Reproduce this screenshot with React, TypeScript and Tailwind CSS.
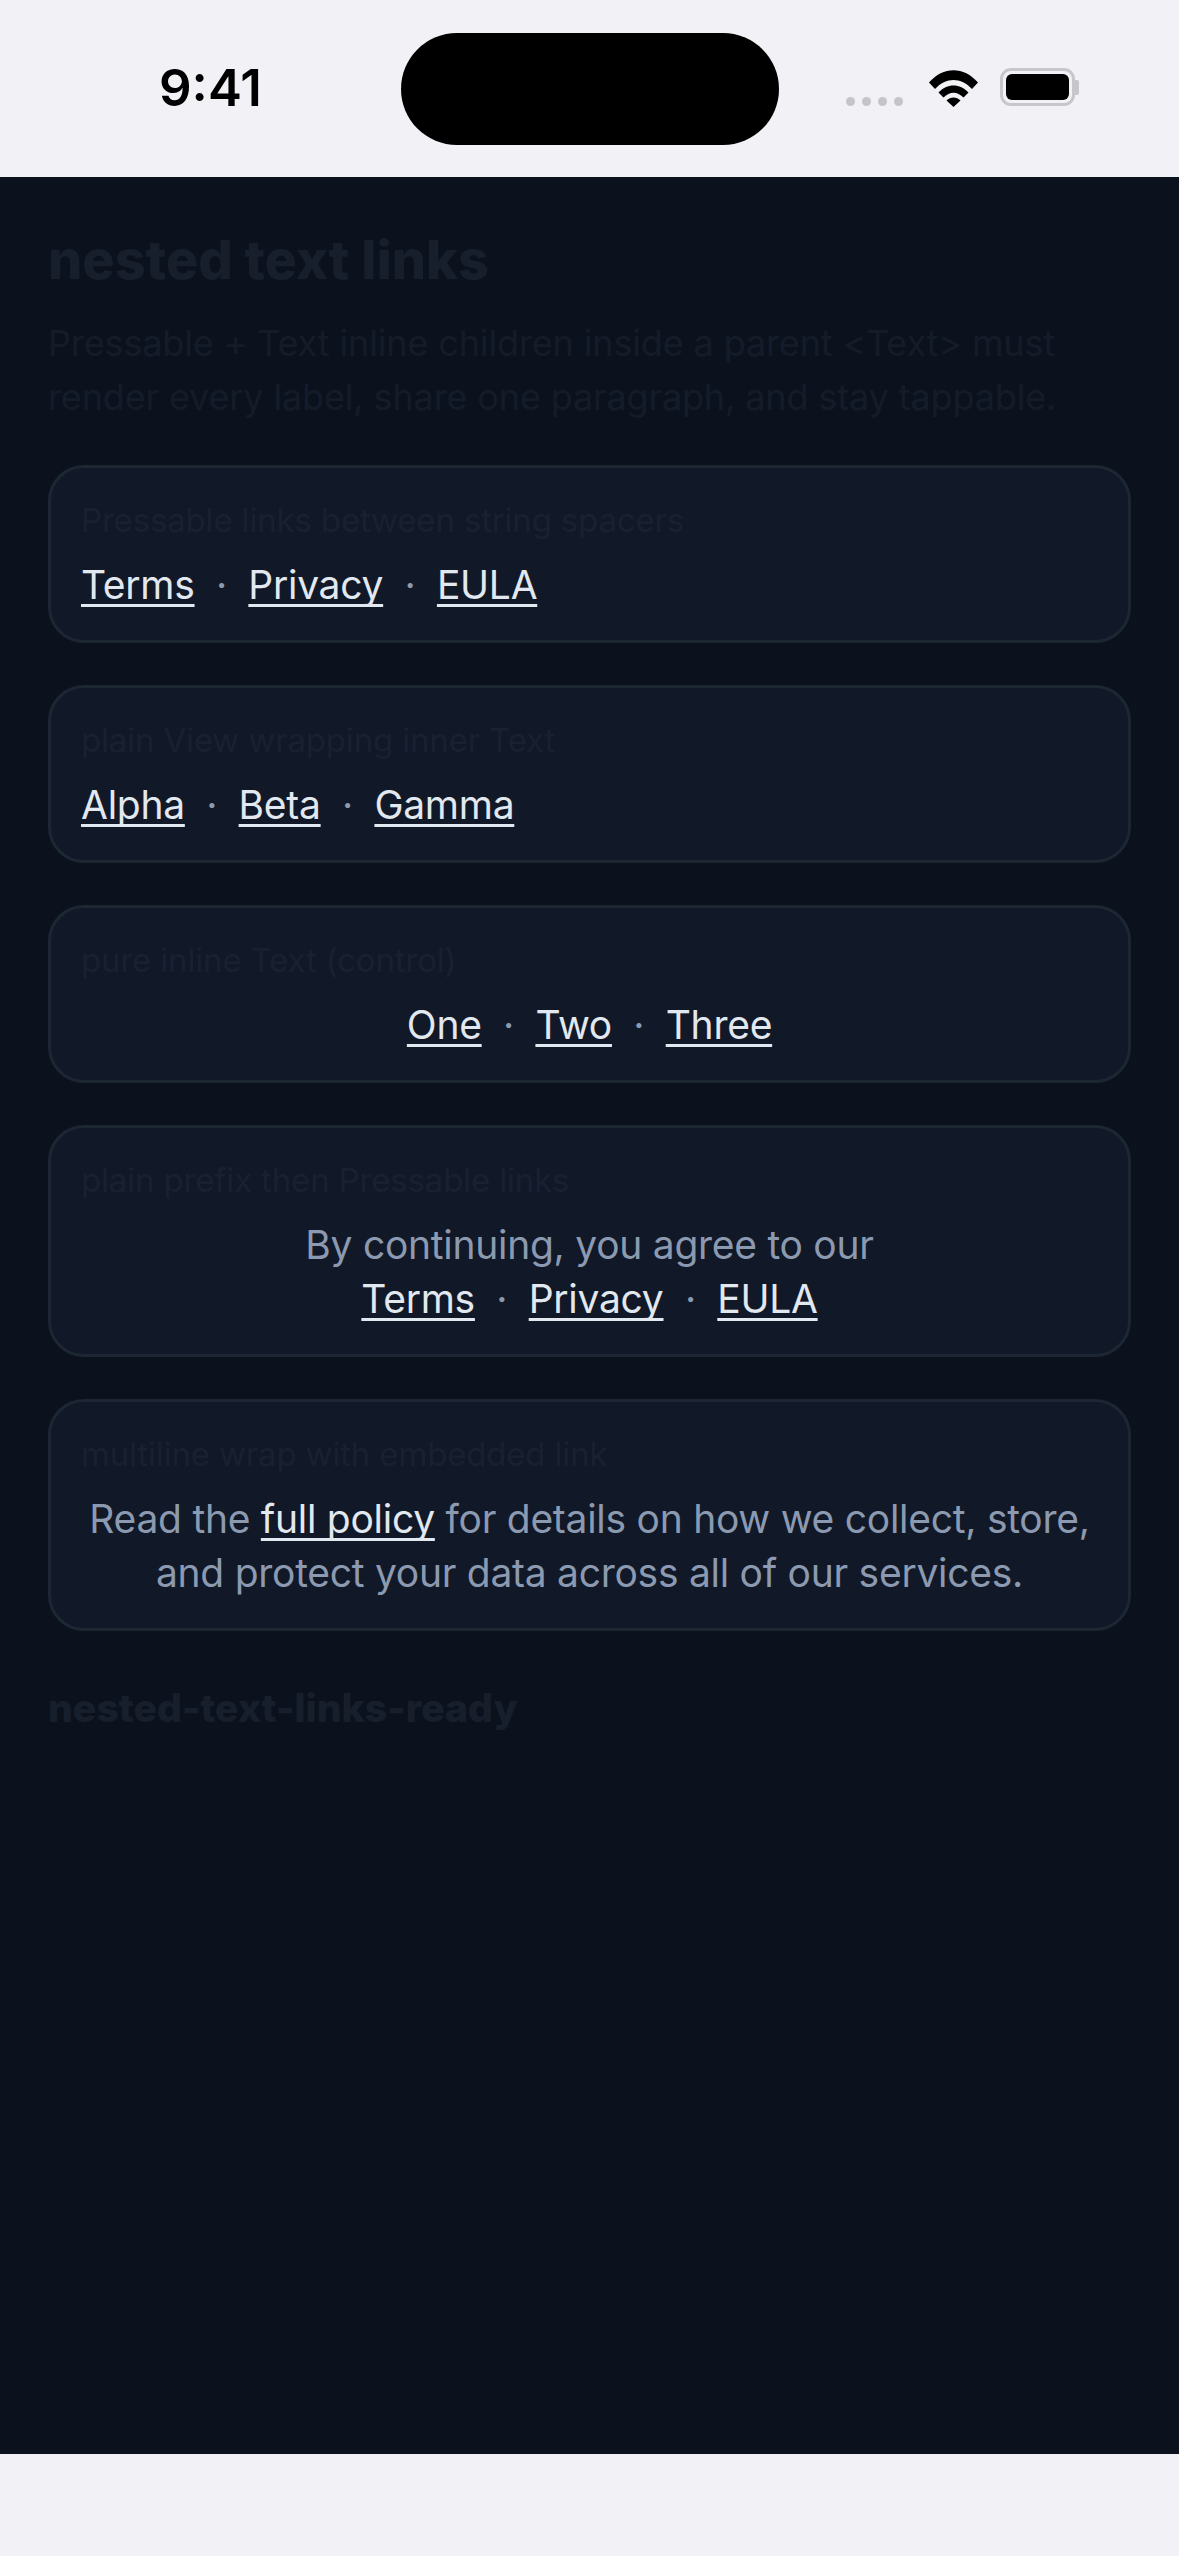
const font = { fontFamily: "Inter, 'Liberation Sans', sans-serif" };

function Link({ children }: { children: string }) {
  return <span className="text-[#e2e8f0] underline decoration-[3px] underline-offset-[5px] [text-decoration-skip-ink:none]">{children}</span>;
}

function Sep() {
  return <span className="text-[#8b9ab0]">{"  ·  "}</span>;
}

function Card({ label, center, children }: { label: string; center?: boolean; children: React.ReactNode }) {
  return (
    <div className="flex flex-col gap-[15px] rounded-[36px] border-[3px] border-[#1c2733] bg-[#111827] px-[30px] pt-[30px] pb-[28px]">
      <p className="text-[33px] leading-[45px] tracking-[-0.17px] text-[#192130]">{label}</p>
      <p className={`text-[39px] leading-[54px] tracking-[-0.27px] whitespace-pre-wrap text-[#8b9ab0] ${center ? "text-center" : ""}`}>{children}</p>
    </div>
  );
}

function Wifi() {
  return (
    <svg width="49" height="37" viewBox="0 0 49 37">
      <path d="M0 12.5C14 -4 35 -4 49 12.5L43 19C32 7 17 7 6 19Z" fill="#000" />
      <path d="M9.5 22.5C18 13 31 13 39.5 22.5L34.5 27.5C28 21 21 21 14.5 27.5Z" fill="#000" />
      <path d="M17.5 30.5C21.5 26.5 27.5 26.5 31.5 30.5L24.5 37Z" fill="#000" />
    </svg>
  );
}

export default function App() {
  return (
    <div style={font} className="flex h-[2556px] w-[1179px] flex-col bg-[#f2f1f6]">
      <header className="relative flex h-[177px] shrink-0 items-start justify-between">
        <span className="ml-[159px] mt-[57px] text-[51px] leading-[62px] font-semibold text-black">9:41</span>
        <div className="absolute left-[401px] top-[33px] h-[112px] w-[378px] rounded-[56px] bg-black" />
        <div className="mr-[100px] mt-[68px] flex items-start">
          <div className="mt-[29px] mr-[26px] flex gap-[7px]">
            <span className="h-[9px] w-[9px] rounded-full bg-[#c4c4c9]" />
            <span className="h-[9px] w-[9px] rounded-full bg-[#c4c4c9]" />
            <span className="h-[9px] w-[9px] rounded-full bg-[#c4c4c9]" />
            <span className="h-[9px] w-[9px] rounded-full bg-[#c4c4c9]" />
          </div>
          <div className="mt-[2px] mr-[22px]">
            <Wifi />
          </div>
          <div className="flex items-center">
            <div className="h-[38px] w-[75px] rounded-[11px] border-[3px] border-[#c6c6cb] p-[3px]">
              <div className="h-full w-full rounded-[6px] bg-black" />
            </div>
            <div className="h-[15px] w-[4px] rounded-r-[2px] bg-[#c6c6cb]" />
          </div>
        </div>
      </header>

      <main className="flex flex-1 flex-col bg-[#0b121e] px-[48px] pt-[50px]">
        <h1 className="text-[54px] leading-[66px] font-extrabold text-[#181f2c]">nested text links</h1>
        <p className="mt-[23px] text-[36px] leading-[54px] tracking-[-0.14px] text-[#151c29]">
          Pressable + Text inline children inside a parent &lt;Text&gt; must render every label, share one paragraph, and stay tappable.
        </p>
        <div className="mt-[41px] flex flex-col gap-[42px]">
          <Card label="Pressable links between string spacers">
            <Link>Terms</Link><Sep /><Link>Privacy</Link><Sep /><Link>EULA</Link>
          </Card>
          <Card label="plain View wrapping inner Text">
            <Link>Alpha</Link><Sep /><Link>Beta</Link><Sep /><Link>Gamma</Link>
          </Card>
          <Card label="pure inline Text (control)" center>
            <Link>One</Link><Sep /><Link>Two</Link><Sep /><Link>Three</Link>
          </Card>
          <Card label="plain prefix then Pressable links" center>
            By continuing, you agree to our{"\n"}
            <Link>Terms</Link><Sep /><Link>Privacy</Link><Sep /><Link>EULA</Link>
          </Card>
          <Card label="multiline wrap with embedded link" center>
            Read the <Link>full policy</Link> for details on how we collect, store, and protect your data across all of our services.
          </Card>
        </div>
        <p className="mt-[53px] text-[39px] leading-[48px] font-extrabold tracking-[0.1px] text-[#181f2c]">nested-text-links-ready</p>
      </main>

      <footer className="h-[102px] shrink-0 bg-[#f2f1f6]" />
    </div>
  );
}
